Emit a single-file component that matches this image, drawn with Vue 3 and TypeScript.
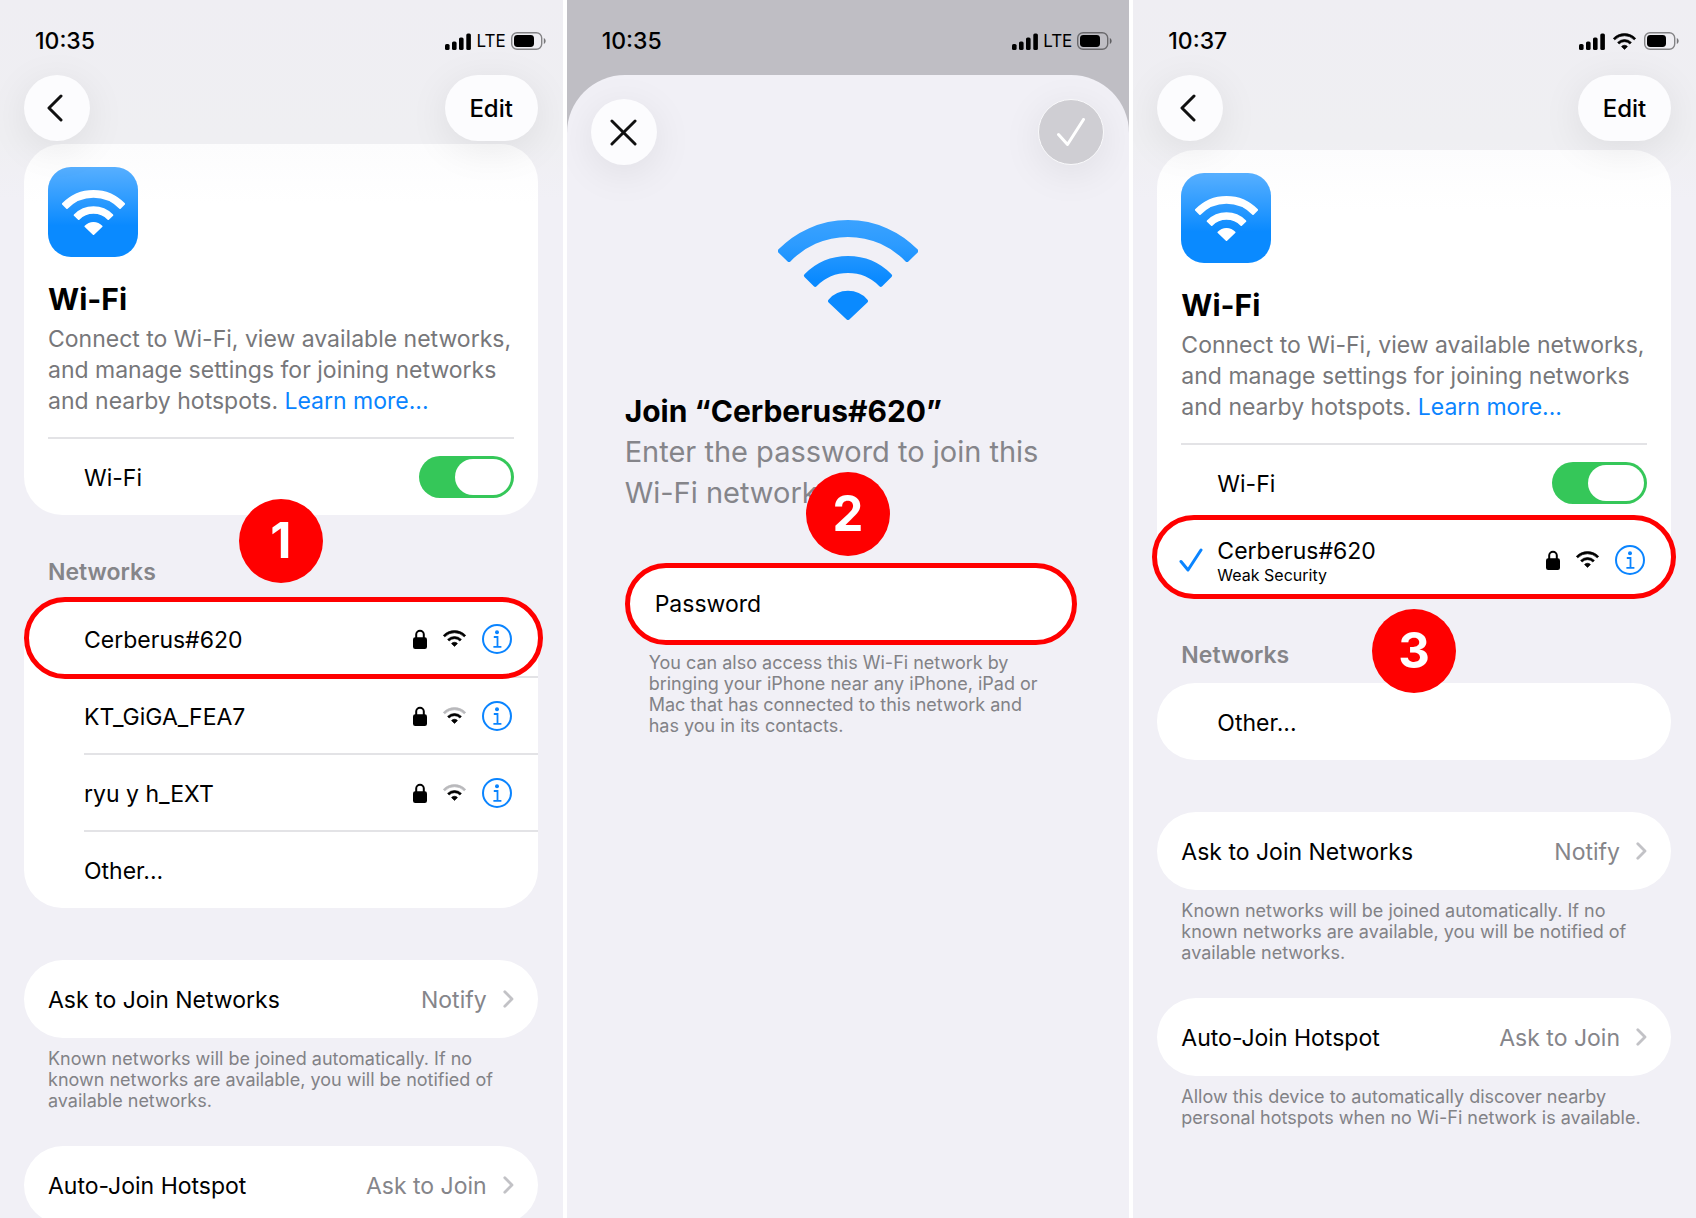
<script setup lang="ts">
import { ref } from 'vue'

interface Network {
  name: string
  note?: string
  weak?: boolean
  marked?: boolean
}

interface Option {
  label: string
  value: string
  hint?: string
}

interface Screen {
  id: string
  kind: 'settings' | 'join'
  time: string
  link: 'LTE' | 'wifi'
  step: number
  current?: Network
  networks?: Network[]
  options?: Option[]
}

const askToJoin: Option = {
  label: 'Ask to Join Networks',
  value: 'Notify',
  hint: 'Known networks will be joined automatically. If no\nknown networks are available, you will be notified of\navailable networks.',
}

const autoJoin: Option = { label: 'Auto-Join Hotspot', value: 'Ask to Join' }

const screens: Screen[] = [
  {
    id: 'pick',
    kind: 'settings',
    time: '10:35',
    link: 'LTE',
    step: 1,
    networks: [
      { name: 'Cerberus#620', marked: true },
      { name: 'KT_GiGA_FEA7', weak: true },
      { name: 'ryu y h_EXT', weak: true },
    ],
    options: [askToJoin, autoJoin],
  },
  { id: 'password', kind: 'join', time: '10:35', link: 'LTE', step: 2 },
  {
    id: 'joined',
    kind: 'settings',
    time: '10:37',
    link: 'wifi',
    step: 3,
    current: { name: 'Cerberus#620', note: 'Weak Security' },
    networks: [],
    options: [
      askToJoin,
      {
        ...autoJoin,
        hint: 'Allow this device to automatically discover nearby\npersonal hotspots when no Wi-Fi network is available.',
      },
    ],
  },
]

const wifiOn = ref(true)
const password = ref('')
</script>

<template>
  <svg class="defs" aria-hidden="true">
    <linearGradient id="sky" x1="0" y1="0" x2="0" y2="100" gradientUnits="userSpaceOnUse">
      <stop offset="0" stop-color="#3aa2ff" />
      <stop offset="0.25" stop-color="#2c9bff" />
      <stop offset="0.6" stop-color="#0a8aff" />
    </linearGradient>
    <symbol id="wifi" viewBox="0 0 140 100">
      <path class="wave far" d="M1.7 31A95 95 0 0 1 138.3 31L129 40A82 82 0 0 0 11 40Z" />
      <path class="wave" d="M27.900 55.600A59 59 0 0 1 112.100 55.600L102.800 64.800A46 46 0 0 0 37.200 64.800Z" />
      <path class="wave" d="M52 81A24 24 0 0 1 88 81L70 98Z" />
    </symbol>
    <symbol id="signal" viewBox="0 0 27 17">
      <rect x="0" y="11" width="4.600" height="6" rx="1.600" />
      <rect x="7" y="8.500" width="4.600" height="8.500" rx="1.600" />
      <rect x="14" y="4.500" width="4.600" height="12.500" rx="1.600" />
      <rect x="21.300" y="0.500" width="4.600" height="16.500" rx="1.600" />
    </symbol>
    <symbol id="lock" viewBox="0 0 14 20">
      <path d="M3.200 9V5.600a3.800 3.800 0 0 1 7.600 0V9" fill="none" stroke="currentColor" stroke-width="2" />
      <rect x="0" y="8.200" width="14" height="11.800" rx="2.200" />
    </symbol>
    <symbol id="info" viewBox="0 0 30 30">
      <circle cx="15" cy="15" r="14" fill="none" stroke="currentColor" stroke-width="2" />
      <circle cx="15" cy="8.200" r="2" />
      <path d="M11.800 13h3.700v9.600M11.400 22.800h8" fill="none" stroke="currentColor" stroke-width="1.800" />
    </symbol>
    <symbol id="chevron" viewBox="0 0 11 18">
      <path d="M1.800 1.800L9 9l-7.200 7.200" fill="none" stroke="currentColor" stroke-width="2.800" stroke-linecap="round" stroke-linejoin="round" />
    </symbol>
  </svg>

  <main class="board">
    <section v-for="screen in screens" :key="screen.id" class="screen" :class="screen.id">
      <div class="status">
        <span class="time">{{ screen.time }}</span>
        <svg class="signal"><use href="#signal" /></svg>
        <span v-if="screen.link === 'LTE'" class="carrier">LTE</span>
        <svg v-else class="wifi-status"><use href="#wifi" /></svg>
        <svg class="battery" viewBox="0 0 35 18">
          <rect x="0.700" y="0.700" width="30" height="16.600" rx="5.400" fill="none" stroke="currentColor" stroke-opacity="0.45" stroke-width="1.400" />
          <path d="M32.800 6v6c1.200-.5 1.800-1.600 1.800-3s-.6-2.500-1.800-3z" fill-opacity="0.5" />
          <rect x="3" y="3" :width="screen.link === 'LTE' ? 20 : 19" height="12" rx="3.400" />
        </svg>
      </div>

      <template v-if="screen.kind === 'settings'">
        <header class="nav">
          <button class="round" type="button" aria-label="Back">
            <svg class="back" viewBox="0 0 18 28"><path d="M15 2L3 14l12 12" /></svg>
          </button>
          <button class="edit" type="button">Edit</button>
        </header>

        <article class="card intro">
          <div class="about">
            <div class="tile"><svg><use href="#wifi" /></svg></div>
            <h2>Wi-Fi</h2>
            <p>
              Connect to Wi-Fi, view available networks,<br />and manage settings for joining networks<br />and
              nearby hotspots. <a href="#learn">Learn more...</a>
            </p>
          </div>
          <label class="switch">
            <span class="label">Wi-Fi</span>
            <input v-model="wifiOn" type="checkbox" role="switch" />
          </label>
          <div v-if="screen.current" class="row current">
            <span class="ring" />
            <svg class="tick" viewBox="0 0 24 24"><path d="M2 13.500L9 22 22 2" /></svg>
            <div class="name label">
              {{ screen.current.name }}
              <small>{{ screen.current.note }}</small>
            </div>
            <svg class="lock"><use href="#lock" /></svg>
            <svg class="strength"><use href="#wifi" /></svg>
            <button class="info" type="button" :aria-label="`Details of ${screen.current.name}`">
              <svg><use href="#info" /></svg>
            </button>
          </div>
        </article>

        <div class="heading">
          <h3>Networks</h3>
          <span class="step">{{ screen.step }}</span>
        </div>

        <ul class="card list">
          <li v-for="net in screen.networks" :key="net.name" class="row">
            <span v-if="net.marked" class="ring" />
            <div class="name label">{{ net.name }}</div>
            <svg class="lock"><use href="#lock" /></svg>
            <svg class="strength" :class="{ weak: net.weak }"><use href="#wifi" /></svg>
            <button class="info" type="button" :aria-label="`Details of ${net.name}`">
              <svg><use href="#info" /></svg>
            </button>
          </li>
          <li class="row"><div class="name label">Other...</div></li>
        </ul>

        <div class="options">
          <div v-for="option in screen.options" :key="option.label" class="option">
            <button class="card choice" type="button">
              <span class="label">{{ option.label }}</span>
              <span class="value label">{{ option.value }}</span>
              <svg class="chevron"><use href="#chevron" /></svg>
            </button>
            <p v-if="option.hint" class="hint">{{ option.hint }}</p>
          </div>
        </div>
      </template>

      <div v-else class="sheet">
        <header class="nav">
          <button class="round" type="button" aria-label="Close">
            <svg class="close" viewBox="0 0 28 28"><path d="M2 2l24 24M26 2L2 26" /></svg>
          </button>
          <button class="round done" type="button" aria-label="Join" disabled>
            <svg class="check" viewBox="0 0 28 28"><path d="M1.500 16.500L10.500 26.500 26.500 1.500" /></svg>
          </button>
        </header>
        <svg class="hero"><use href="#wifi" /></svg>
        <form class="join" @submit.prevent>
          <h2>Join “Cerberus#620”</h2>
          <p class="prompt">Enter the password to join this<br />Wi-Fi network.</p>
          <span class="step">{{ screen.step }}</span>
          <input v-model="password" type="password" placeholder="Password" aria-label="Password" />
          <p class="hint">You can also access this Wi-Fi network by<br />bringing your iPhone near any iPhone, iPad or<br />Mac that has connected to this network and<br />has you in its contacts.</p>
        </form>
      </div>
    </section>
  </main>
</template>

<style>
body {
  margin: 0;
  background: #fff;
}
</style>

<style scoped>
.defs {
  position: absolute;
  width: 0;
  height: 0;
}

.board {
  display: grid;
  grid-template-columns: repeat(3, minmax(0, 1fr));
  gap: 4px;
  height: 100vh;
  overflow: hidden;
  font-family: Inter, 'Liberation Sans', sans-serif;
  font-size: 23px;
  line-height: 28px;
  color: #000;
}

.screen {
  display: flex;
  flex-direction: column;
  min-height: 0;
  overflow: hidden;
  background: #f1f0f6;
}

.pick,
.joined {
  background: linear-gradient(#efeef3, #efeff2 140px, #f1f0f6 200px);
}

.password {
  background: #bfbec4;
}

h2,
h3,
p,
ul {
  margin: 0;
  padding: 0;
}

button {
  border: 0;
  padding: 0;
  font: inherit;
  color: inherit;
  background: none;
}

svg {
  display: block;
  flex: none;
  fill: currentColor;
}

.wave {
  stroke: var(--wave, currentColor);
  fill: var(--wave, currentColor);
  stroke-width: 4;
  stroke-linejoin: round;
}

.far {
  stroke: var(--far, var(--wave, currentColor));
  fill: var(--far, var(--wave, currentColor));
}

.status {
  display: flex;
  flex: none;
  align-items: center;
  box-sizing: border-box;
  height: 75px;
  padding: 7px 17px 0 35px;
}

.time {
  margin-right: auto;
  font-size: 23px;
  font-weight: 500;
}

.signal {
  width: 27px;
  height: 17px;
}

.carrier {
  margin: 0 5px 0 4px;
  font-size: 17px;
}

.wifi-status {
  width: 23px;
  height: 17px;
  margin: 0 8px 0 7px;
}

.battery {
  width: 35px;
  height: 18px;
}

.nav {
  position: relative;
  z-index: 2;
  display: flex;
  flex: none;
  justify-content: space-between;
  padding: 0 25px 0 24px;
}

.round,
.edit {
  display: grid;
  place-items: center;
  width: 66px;
  height: 66px;
  border-radius: 33px;
  background: #fcfcfe;
  box-shadow: 0 8px 40px rgba(0, 0, 0, 0.08);
}

.edit {
  box-sizing: border-box;
  width: 93px;
  padding-top: 2px;
  font-size: 24px;
  font-weight: 500;
}

.back,
.close,
.check {
  fill: none;
  stroke: #111;
  stroke-width: 3;
  stroke-linecap: round;
  stroke-linejoin: round;
}

.back {
  width: 18px;
  height: 28px;
  margin-right: 4px;
}

.close {
  width: 27px;
  height: 27px;
}

.check {
  width: 28px;
  height: 28px;
  stroke: #fff;
}

.done {
  box-sizing: border-box;
  border: 1px solid #fafafc;
  background: #cfced3;
}

.card {
  flex: none;
  margin: 0 25px 0 24px;
  border-radius: 38px;
  background: #fff;
}

.intro {
  margin-top: 3px;
  padding-top: 23px;
  background: linear-gradient(#fcfcfd, #fff 60px);
}

.joined .intro {
  margin-top: 9px;
}

.about {
  margin: 0 24px;
  padding-bottom: 20px;
  border-bottom: 2px solid #e3e3e6;
}

.tile {
  display: grid;
  place-items: center;
  width: 90px;
  height: 90px;
  border-radius: 23px;
  color: #fff;
  background: linear-gradient(#57afff, #2f9cff 35%, #0a8aff 65%);
}

.tile svg {
  width: 63px;
  height: 45px;
}

h2 {
  font-size: 30px;
  font-weight: 700;
  line-height: 40px;
}

.about h2 {
  margin-top: 22px;
}

.about p {
  margin-top: 5px;
  line-height: 31px;
  color: #77777a;
  white-space: nowrap;
}

.about a {
  color: #0a84ff;
  text-decoration: none;
}

.label {
  padding-top: 2px;
}

.switch {
  display: flex;
  align-items: center;
  justify-content: space-between;
  height: 76px;
  padding: 0 24px 0 60px;
}

.switch input {
  appearance: none;
  width: 95px;
  height: 42px;
  margin: 0;
  padding: 3px;
  box-sizing: border-box;
  border-radius: 21px;
  background: #d8d8dc;
}

.switch input::before {
  content: '';
  display: block;
  width: 56px;
  height: 36px;
  border-radius: 18px;
  background: #fff;
}

.switch input:checked {
  background: #35c759;
}

.switch input:checked::before {
  margin-left: auto;
}

.heading {
  position: relative;
  flex: none;
  margin: 43px 25px 14px 24px;
  padding-left: 24px;
}

h3 {
  font-size: 23px;
  font-weight: 600;
  line-height: 28px;
  color: #858589;
}

.step {
  position: absolute;
  z-index: 3;
  top: -59px;
  left: 50%;
  width: 84px;
  margin-left: -42px;
  border-radius: 50%;
  font-size: 49px;
  font-weight: 700;
  line-height: 84px;
  text-align: center;
  color: #fff;
  background: #f00;
}

.joined .step {
  top: -32px;
}

.list {
  list-style: none;
}

.row {
  position: relative;
  display: flex;
  align-items: center;
  height: 77px;
  padding: 0 26px 0 60px;
}

.row > * {
  position: relative;
}

.row:not(:last-child)::before {
  content: '';
  position: absolute;
  right: 0;
  bottom: -1px;
  left: 60px;
  height: 2px;
  background: #e3e3e6;
}

.row > .ring {
  position: absolute;
  inset: -3px -5px -2px 0;
  border: 5px solid #f00;
  border-radius: 42px;
  background: #fff;
}

.current > .ring {
  inset: -6px -5px -1px;
}

.name {
  flex: 1;
}

.name small {
  display: block;
  font-size: 16px;
  line-height: 20px;
}

.tick {
  width: 24px;
  height: 24px;
  margin: 0 14px 0 -38px;
  fill: none;
  stroke: #0a84ff;
  stroke-width: 3;
  stroke-linecap: round;
  stroke-linejoin: round;
}

.lock {
  width: 14px;
  height: 20px;
}

.strength {
  width: 23px;
  height: 17px;
  margin: 0 16px;
}

.weak {
  --far: #b9b9bc;
}

.info {
  color: #0a84ff;
}

.info svg {
  width: 30px;
  height: 30px;
}

.options {
  display: flex;
  flex: none;
  flex-direction: column;
  gap: 35px;
  margin-top: 52px;
}

.option {
  display: flex;
  flex-direction: column;
}

.choice {
  display: flex;
  align-items: center;
  height: 78px;
  padding: 0 24px;
  border-radius: 39px;
}

.value {
  margin: 0 16px 0 auto;
  color: #85858a;
}

.chevron {
  width: 11px;
  height: 18px;
  color: #c2c2c6;
}

.hint {
  margin: 10px 24px 0 48px;
  font-size: 18px;
  line-height: 21px;
  color: #828286;
  white-space: pre;
}

.sheet {
  flex: 1;
  padding-top: 24px;
  border-radius: 58px 58px 0 0;
  background: #f1f0f6;
}

.hero {
  --wave: url(#sky);
  width: 140px;
  height: 100px;
  margin: 55px auto 71px;
}

.join {
  position: relative;
  padding: 0 52px 0 58px;
}

.join .step {
  top: 81px;
}

.prompt {
  font-size: 29px;
  line-height: 41px;
  color: #85858a;
  white-space: nowrap;
}

.join input {
  display: block;
  box-sizing: border-box;
  width: 100%;
  height: 82px;
  margin-top: 50px;
  padding: 0 25px;
  border: 5px solid #f00;
  border-radius: 41px;
  font: inherit;
  background: #fff;
}

.join input::placeholder {
  color: #000;
  opacity: 1;
}

.join .hint {
  margin: 7px 0 0 24px;
}
</style>
